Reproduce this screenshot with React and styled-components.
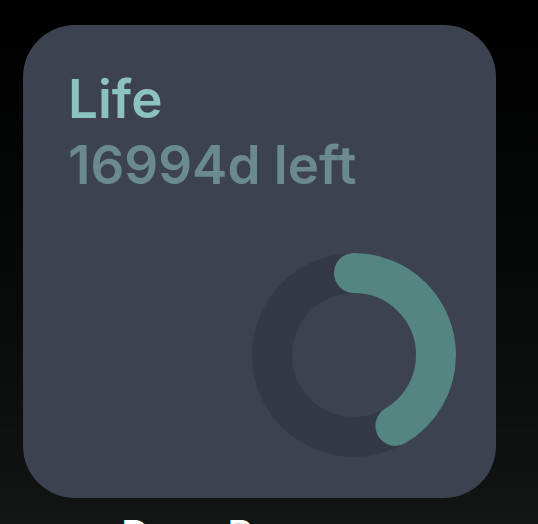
import React from "react";
import styled, { createGlobalStyle } from "styled-components";

const Global = createGlobalStyle`
  html, body {
    margin: 0;
    padding: 0;
    height: 100%;
  }
  body {
    background: linear-gradient(180deg, #000000 0%, #050606 40%, #121514 100%);
    font-family: Inter, "Noto Sans", sans-serif;
    overflow: hidden;
  }
`;

const Screen = styled.div`
  width: 538px;
  height: 524px;
  box-sizing: border-box;
  padding: 25px 0 0 23px;
  display: flex;
  flex-direction: column;
  overflow: hidden;
`;

const Widget = styled.div`
  flex-shrink: 0;
  width: 473px;
  height: 473px;
  box-sizing: border-box;
  border-radius: 52px;
  background: #3c4250;
  padding: 41px 40px 41px 45px;
  display: flex;
  flex-direction: column;
`;

const Title = styled.div`
  font-size: 53px;
  font-weight: 600;
  line-height: 66px;
  letter-spacing: 0;
  color: ${(p) => p.$color};
  white-space: nowrap;
`;

const RingRow = styled.div`
  margin-top: auto;
  display: flex;
  justify-content: flex-end;
`;

const Label = styled.div`
  flex-shrink: 0;
  width: 473px;
  margin-top: 17px;
  text-align: center;
  color: #ffffff;
  font-size: 40px;
  font-weight: 500;
  line-height: 1;
  white-space: nowrap;
`;

function Ring({ progress, size = 204, stroke = 40 }) {
  const r = (size - stroke) / 2;
  const c = 2 * Math.PI * r;
  return (
    <svg width={size} height={size} viewBox={`0 0 ${size} ${size}`}>
      <circle cx={size / 2} cy={size / 2} r={r} fill="none" stroke="#343946" strokeWidth={stroke} />
      <circle
        cx={size / 2}
        cy={size / 2}
        r={r}
        fill="none"
        stroke="#558580"
        strokeWidth={stroke}
        strokeLinecap="round"
        strokeDasharray={`${c * progress} ${c}`}
        transform={`rotate(-90 ${size / 2} ${size / 2})`}
      />
    </svg>
  );
}

export default function App() {
  return (
    <>
      <Global />
      <Screen>
        <Widget>
          <Title $color="#8cc3bf">Life</Title>
          <Title $color="#6b8a8f">16994d left</Title>
          <RingRow>
            <Ring progress={0.415} />
          </RingRow>
        </Widget>
        <Label>Days Progress</Label>
      </Screen>
    </>
  );
}
